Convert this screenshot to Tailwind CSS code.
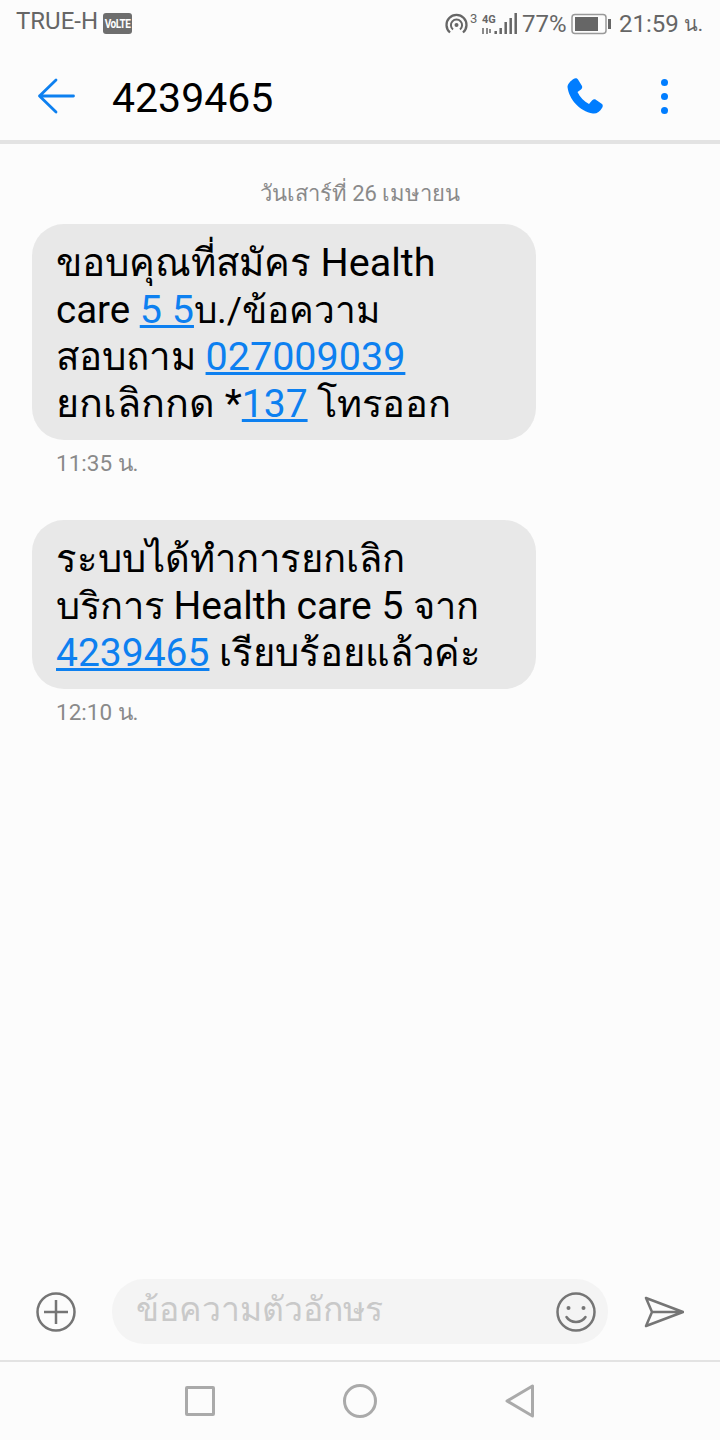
<!DOCTYPE html>
<html lang="th">
<head>
<meta charset="UTF-8" />
<title>Messages</title>
<script src="https://cdn.jsdelivr.net/npm/@tailwindcss/browser@4"></script>
</head>
<body class="w-[720px] h-[1440px] bg-[#fcfcfc] font-['Roboto','Noto_Sans','Noto_Sans_CJK_SC',sans-serif] flex flex-col overflow-hidden">

  <!-- status bar -->
  <div class="h-[48px] pl-4 pr-[17px] flex items-center text-[#666] text-[24px] shrink-0">
    <div class="flex items-center -mt-[6px]">
      <span>TRUE-H</span>
      <span class="ml-[5px] w-[29px] h-[21px] mt-[4px] bg-[#6e6e6e] rounded-[3px] flex items-center justify-center">
        <span class="text-white text-[10px] font-bold tracking-[-0.5px] scale-y-125">VoLTE</span>
      </span>
    </div>
    <svg class="ml-auto overflow-visible" width="73" height="24" viewBox="0 0 73 24" fill="none" stroke="#666">
      <circle cx="11.500" cy="13" r="2" fill="#666" stroke="none"/>
      <path d="M8 17.500a5.600 5.600 0 1 1 7 0" stroke-width="2"/>
      <path d="M5 20.500a10 10 0 1 1 13 0" stroke-width="2.300"/>
      <text x="25" y="11" font-size="13" fill="#666" stroke="none">3</text>
      <text x="37" y="11" font-size="11" font-weight="700" fill="#666" stroke="none">4G</text>
      <path d="M38 16v6M42 16v6M45 17v4" stroke-width="1.500"/>
      <path d="M50.700 19v3M55.700 16v6M60.700 10v12M65.700 6v16M70.700 1v21" stroke-width="2.500"/>
    </svg>
    <span class="ml-[4px] w-[43px]">77%</span>
    <svg class="ml-[6px]" width="41" height="22" viewBox="0 0 41 22" fill="none"><rect x="1" y="1.500" width="34" height="19" rx="3" stroke="#999" stroke-width="1.500"/><rect x="4" y="4" width="23" height="14" fill="#666"/><rect x="37" y="6" width="3" height="10" fill="#666"/></svg>
    <span class="ml-[7px]">21:59</span>
    <span class="ml-[5px] text-[20px]">น.</span>
  </div>

  <!-- header -->
  <div class="h-[96px] pt-1 border-b-4 border-[#e3e3e3] flex items-center pl-[37px] pr-[52px] shrink-0">
    <svg width="38" height="36" viewBox="0 0 38 36" fill="none" stroke="#0d80f0" stroke-width="2.800" stroke-linecap="round" stroke-linejoin="round"><path d="M36.500 18H2.500M19 2 2.500 18 19 34"/></svg>
    <span class="ml-[37px] mt-[5px] text-[41px] text-black">4239465</span>
    <svg class="ml-auto" width="36" height="36" viewBox="0 0 36 36" fill="#007dff"><path d="M6.500 1C8 0 10 0 11 1.500L15 8C15.500 9.500 15 10.500 14 11.500L10.500 14C13 19 17 23.500 22 26L25 22.500C26 21.500 27.500 21 28.500 21.500L35 26C36 27 36 28.500 35 30C33 33.500 29.500 36 26 35.500C12 33 2 21 0.500 9C0.500 6 3.500 3 6.500 1Z"/></svg>
    <div class="ml-[58px] flex flex-col gap-[7px]">
      <span class="w-[7px] h-[7px] rounded-full bg-[#007dff]"></span>
      <span class="w-[7px] h-[7px] rounded-full bg-[#007dff]"></span>
      <span class="w-[7px] h-[7px] rounded-full bg-[#007dff]"></span>
    </div>
  </div>

  <!-- messages -->
  <div class="flex-1 px-8 pt-[37px]">
    <div class="text-center text-[22px] leading-[26px] text-[#8a8a8a] mb-[17px]">วันเสาร์ที่ 26 เมษายน</div>

    <div class="w-[504px] bg-[#e8e8e8] rounded-[32px] px-6 pt-[15px] pb-[13px] text-[38.500px] leading-[47px] text-black">
      <div class="h-[47px]">ขอบคุณที่สมัคร <span class="text-[39.500px]">Health</span></div>
      <div class="h-[47px]">care <a class="text-[#0d80f0] underline text-[39.500px]">5 5</a><span class="text-[37px]">บ./ข้อความ</span></div>
      <div class="h-[47px]">สอบถาม <a class="text-[#0d80f0] underline text-[39.500px]">027009039</a></div>
      <div class="h-[47px]"><span class="text-[39.500px]">ยกเลิกกด *</span><a class="text-[#0d80f0] underline text-[39px]">137</a> <span class="text-[38px]">โทรออก</span></div>
    </div>
    <div class="mt-[10px] ml-6 text-[22.500px] leading-[26px] text-[#8a8a8a]">11:35 น.</div>

    <div class="mt-[44px] w-[504px] bg-[#e8e8e8] rounded-[32px] px-6 pt-[16px] pb-[12px] text-[38.200px] leading-[47px] text-black">
      <div class="h-[47px]">ระบบได้ทำการยกเลิก</div>
      <div class="h-[47px]"><span class="text-[38px]">บริการ</span> <span class="text-[39px]">Health care 5</span> <span class="text-[38px]">จาก</span></div>
      <div class="h-[47px]"><a class="text-[#0d80f0] underline text-[39px]">4239465</a> เรียบร้อยแล้วค่ะ</div>
    </div>
    <div class="mt-[10px] ml-6 text-[22.500px] leading-[26px] text-[#8a8a8a]">12:10 น.</div>
  </div>

  <!-- composer -->
  <div class="h-[98px] flex items-center pl-9 pt-[1px] shrink-0">
    <svg width="40" height="40" viewBox="0 0 40 40" fill="none" stroke="#757575" stroke-width="2.500"><circle cx="20" cy="20" r="18.500"/><path d="M20 8v24M8 20h24"/></svg>
    <div class="ml-9 w-[496px] h-[65px] rounded-[32px] bg-[#f4f4f4] flex items-center pl-6 pr-3 text-[33.700px] text-[#c9c9c9]">
      <span class="-mt-[2px]">ข้อความตัวอักษร</span>
      <svg class="ml-auto" width="40" height="40" viewBox="0 0 40 40" fill="none" stroke="#757575" stroke-width="2.500"><circle cx="20" cy="20" r="18.500"/><circle cx="12.500" cy="16" r="2" fill="#757575" stroke="none"/><circle cx="27.500" cy="16" r="2" fill="#757575" stroke="none"/><path d="M10.500 25c4 6.500 15 6.500 19 0" stroke-linecap="round"/></svg>
    </div>
    <svg class="ml-[36px]" width="40" height="32" viewBox="0 0 40 32" fill="none" stroke="#757575" stroke-width="2.500" stroke-linejoin="round" stroke-linecap="round"><path d="M2 2 39 16 2 30 8 16ZM8 16H39"/></svg>
  </div>

  <!-- nav bar -->
  <div class="h-[80px] border-t-2 border-[#e3e3e3] flex items-center pl-[185px] shrink-0">
    <span class="w-[30px] h-[30px] border-[3px] border-[#aaa] rounded-[2px]"></span>
    <span class="ml-[128px] w-[34px] h-[34px] border-[3px] border-[#aaa] rounded-full"></span>
    <svg class="ml-[128px]" width="30" height="34" viewBox="0 0 30 34" fill="none" stroke="#aaa" stroke-width="3" stroke-linejoin="round"><path d="M27.500 2v30L2 17z"/></svg>
  </div>
</body>
</html>
